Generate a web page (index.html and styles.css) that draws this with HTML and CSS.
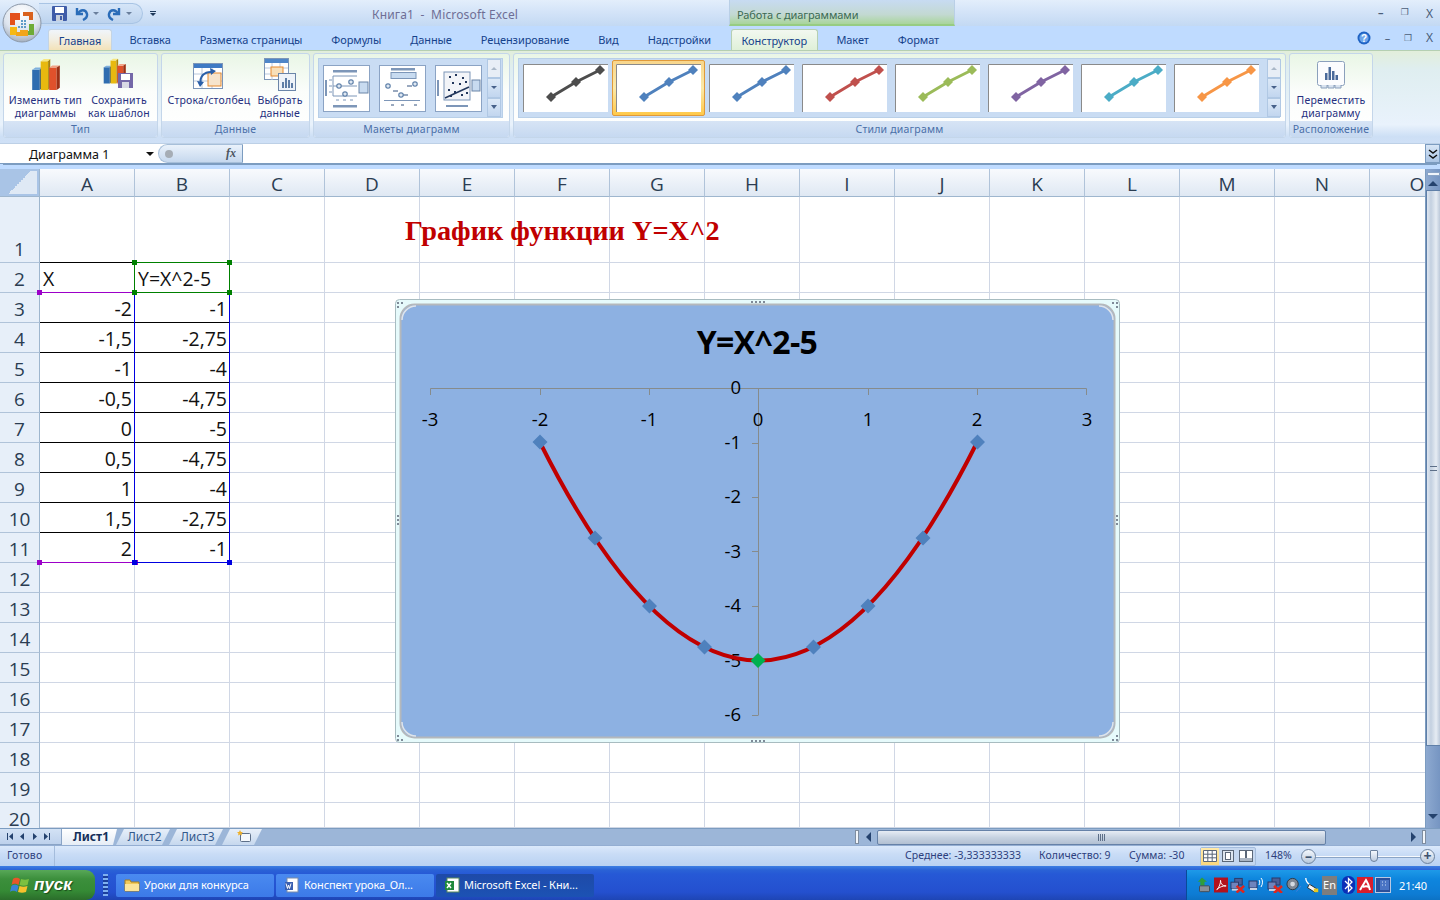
FILE: index.html
```html
<!DOCTYPE html>
<html lang="ru">
<head>
<meta charset="utf-8">
<title>Книга1 - Microsoft Excel</title>
<link rel="stylesheet" href="styles.css">
</head>
<body>
<svg class="defs" width="0" height="0">
  <defs>
    <g id="d"><path d="M0 -5L5 0L0 5L-5 0Z" fill="currentColor"/></g>
    <g id="linethumb">
      <rect width="85" height="48" fill="#fff"/>
      <path d="M.5 48V.5H85" fill="none" stroke="#8a8a8a"/>
      <path d="M28 33L53 18L77 6" fill="none" stroke="currentColor" stroke-width="3"/>
      <use href="#d" x="28" y="33"/><use href="#d" x="53" y="18"/><use href="#d" x="77" y="6"/>
    </g>
    <g id="layoutbase">
      <rect x=".5" y=".5" width="46" height="46" fill="#fff" stroke="#8ba3c4"/>
    </g>
    <g id="dot"><circle r="2.2" fill="#dfe8f2" stroke="#5d7fa8" stroke-width="1.2"/></g>
    <g id="bars">
      <path d="M2 11h7v19H2z" fill="#2f6db0"/><path d="M2 11l3-2h7l-3 2z" fill="#7fb0dd"/><path d="M9 11l3-2v19l-3 2z" fill="#1c4a80"/>
      <path d="M10 3h7v27h-7z" fill="#e8b90f"/><path d="M10 3l3-2h6l-2 2z" fill="#f8e680"/><path d="M17 3l2-2v27l-2 2z" fill="#a9830a"/>
      <path d="M18 9h7v21h-7z" fill="#e0512b"/><path d="M18 9l3-2h7l-3 2z" fill="#f2a285"/><path d="M25 9l3-2v21l-3 2z" fill="#9c3015"/>
    </g>
    <g id="netx">
      <rect x="5" y="1" width="8" height="7" fill="#4a5f98" stroke="#2a3868"/><rect x="1" y="5" width="8" height="7" fill="#6f84bd" stroke="#2a3868"/><rect x="2" y="12" width="7" height="2" fill="#c8d0e0"/>
      <path d="M7 9l8 7M15 9l-8 7" stroke="#e0261c" stroke-width="2.6"/>
    </g>
  </defs>
</svg>

<header class="titlebar">
  <svg class="orb" width="40" height="40" viewBox="0 0 40 40">
    <defs><radialGradient id="og" cx=".5" cy=".25" r=".8"><stop offset="0" stop-color="#fff"/><stop offset=".6" stop-color="#dde4ee"/><stop offset="1" stop-color="#9aa7b8"/></radialGradient></defs>
    <circle cx="20" cy="20" r="19" fill="url(#og)" stroke="#8c98a8"/>
    <path d="M8 10h10v7h-5v5H8z" fill="#e3501b"/><path d="M8 24h7v8H8z" fill="#f5b915"/><path d="M18 27h8v6H14v-4h4z" fill="#f2a51a"/>
    <path d="M21 9h10v8h-4v-4h-6z" fill="#d9621e"/><path d="M27 21h5v11h-6v-4h1z" fill="#6eab35"/>
    <path d="M19 17h2v2h-2zM22 17h2v2h-2zM19 20h2v2h-2zM22 20h2v2h-2zM16 23h2v2h-2zM19 23h2v2h-2zM22 23h2v2h-2z" fill="#5f9bc8"/>
  </svg>
  <div class="qat">
    <svg width="15" height="15" viewBox="0 0 15 15"><rect width="15" height="15" rx="1" fill="#3f5ca8"/><rect x="3" y="1" width="9" height="6" fill="#fff"/><rect x="4" y="9" width="7" height="6" fill="#c8d0dc"/><rect x="8" y="10" width="2" height="4" fill="#3f5ca8"/></svg>
    <svg class="qi1" width="15" height="15" viewBox="0 0 15 15"><path d="M3 2v6h6" fill="none" stroke="#2a6cb8" stroke-width="2.4"/><path d="M4 8c2-5 8-5 9 0 .5 3-2 5-4 6" fill="none" stroke="#2a6cb8" stroke-width="2.4"/></svg>
    <span class="caret"></span>
    <svg class="qi2" width="15" height="15" viewBox="0 0 15 15"><path d="M12 2v6H6" fill="none" stroke="#2a6cb8" stroke-width="2.4"/><path d="M11 8C9 3 3 3 2 8c-.5 3 2 5 4 6" fill="none" stroke="#2a6cb8" stroke-width="2.4"/></svg>
    <span class="caret"></span>
  </div>
  <div class="qat-more"><span class="bar"></span><span class="caret dark"></span></div>
  <div class="doc-title">Книга1&nbsp; - &nbsp;Microsoft Excel</div>
  <div class="ctx-title">Работа с диаграммами</div>
  <div class="winbtns"><span>–</span><span class="sq">❐</span><span class="x">X</span></div>
</header>

<nav class="tabs">
  <div class="tab active">Главная</div>
  <div class="tab t-first">Вставка</div>
  <div class="tab">Разметка страницы</div>
  <div class="tab">Формулы</div>
  <div class="tab">Данные</div>
  <div class="tab">Рецензирование</div>
  <div class="tab">Вид</div>
  <div class="tab t-last">Надстройки</div>
  <div class="ctx-zone">
    <div class="tab ctx-active">Конструктор</div>
    <div class="tab t-maket">Макет</div>
    <div class="tab">Формат</div>
  </div>
  <div class="tab-right">
    <svg width="14" height="14" viewBox="0 0 14 14"><circle cx="7" cy="7" r="6.5" fill="#1f63c4"/><circle cx="7" cy="7" r="4.6" fill="#6ea6ea"/><text x="7" y="10.5" class="help">?</text></svg>
    <span>–</span><span class="sq">❐</span><span class="x">X</span>
  </div>
</nav>

<section class="ribbon">
  <div class="group g-tip">
    <div class="gbody">
      <div class="lbtn b-w80">
        <svg width="32" height="34" viewBox="0 0 30 32"><use href="#bars"/></svg>
        <span>Изменить тип<br>диаграммы</span>
      </div>
      <div class="lbtn b-w66">
        <svg width="34" height="34" viewBox="0 0 34 34"><g transform="scale(.85)"><use href="#bars"/></g><rect x="16" y="15" width="15" height="15" fill="#7468a8"/><rect x="19" y="16" width="9" height="6" fill="#fff"/><rect x="20" y="24" width="7" height="6" fill="#d8d8e4"/></svg>
        <span>Сохранить<br>как шаблон</span>
      </div>
    </div>
    <div class="gfoot">Тип</div>
  </div>
  <div class="group g-dan">
    <div class="gbody">
      <div class="lbtn b-w90">
        <svg width="32" height="30" viewBox="0 0 32 30"><rect x=".5" y="3.5" width="29" height="25" fill="#fff" stroke="#7d96b8"/><rect x="1" y="4" width="28" height="4" fill="#3f7ac4"/><path d="M1 14h28M1 21h28M9 8v20M19 8v20" stroke="#b9c8dc"/><rect x="15" y="13" width="13" height="13" fill="#f6e4cc" stroke="#e58a2e"/><path d="M8 24c-2-7 3-13 12-12" fill="none" stroke="#2a5fa8" stroke-width="2"/><path d="M17 8l6 3-5 4zM4 21l7 1-4 5z" fill="#2a5fa8"/></svg>
        <span>Строка/столбец</span>
      </div>
      <div class="lbtn b-w50">
        <svg width="32" height="34" viewBox="0 0 32 34"><rect x=".5" y=".5" width="24" height="21" fill="#fff" stroke="#7d96b8"/><rect x="1" y="1" width="23" height="4" fill="#4f86c8"/><path d="M1 10h23M1 16h23M8 5v17M16 5v17" stroke="#b9c8dc"/><rect x="7" y="9" width="12" height="9" fill="#f8dfb8" stroke="#e58a2e"/><rect x="14.500" y="15.500" width="17" height="17" fill="#eef3f9" stroke="#6b85a8"/><path d="M18 30v-6h2v6zM21 30V20h2v10zM24 30v-8h2v8zM27 30v-5h2v5z" fill="#5f7ea6"/></svg>
        <span>Выбрать<br>данные</span>
      </div>
    </div>
    <div class="gfoot">Данные</div>
  </div>
  <div class="group g-mak">
    <div class="gbody">
      <div class="gal gal-mak">
        <svg class="lay" width="47" height="47" viewBox="0 0 47 47"><use href="#layoutbase"/><path d="M10 5h24v2.500H10zM10 40h24v2.500H10zM2 15h2v16H2z" fill="#7d96b8"/><path d="M10 11h24M10 21h24M10 31h24M10 11v20M6 15h3M6 21h3M6 27h3M13 35h3M20 35h3M27 35h3" stroke="#7d96b8" fill="none"/><use href="#dot" x="16" y="21"/><use href="#dot" x="28" y="17"/><use href="#dot" x="22" y="29"/><rect x="36" y="17" width="9" height="11" fill="#c8dbf0" stroke="#6b85a8"/></svg>
        <svg class="lay" width="47" height="47" viewBox="0 0 47 47"><use href="#layoutbase"/><path d="M12 3h24v2.500H12zM5 35h36v1H5z" fill="#7d96b8"/><rect x="12" y="7.500" width="25" height="6" fill="#c8dbf0" stroke="#7d96b8"/><path d="M14 26h5M28 21h5M24 30h5M12 40h3M22 40h3M35 40h3" stroke="#34527e"/><use href="#dot" x="9" y="21"/><use href="#dot" x="36" y="19"/><use href="#dot" x="22" y="30"/></svg>
        <svg class="lay" width="47" height="47" viewBox="0 0 47 47"><use href="#layoutbase"/><rect x="9" y="7" width="26" height="28" fill="#f2f4f8" stroke="#7d96b8"/><path d="M10 33L34 22" stroke="#22375c" stroke-width="1.500"/><path d="M14 12h2M20 10h2M27 13h2M17 18h2M24 19h2M30 17h2M13 25h2M19 27h2M26 30h2M31 28h2M15 31h2" stroke="#22375c" stroke-width="2"/><path d="M11 40h22v2H11zM2 15h2v16H2z" fill="#7d96b8"/><rect x="37" y="15" width="8" height="11" fill="#c8dbf0" stroke="#6b85a8"/></svg>
        <div class="gscroll"><span class="up off"></span><span class="down"></span><span class="more"></span></div>
      </div>
    </div>
    <div class="gfoot">Макеты диаграмм</div>
  </div>
  <div class="group g-sti">
    <div class="gbody">
      <div class="gal gal-sti">
        <svg class="st s0" width="85" height="48"><use href="#linethumb"/></svg>
        <div class="st-sel"><svg class="st s1" width="85" height="48"><use href="#linethumb"/></svg></div>
        <svg class="st s1" width="85" height="48"><use href="#linethumb"/></svg>
        <svg class="st s2" width="85" height="48"><use href="#linethumb"/></svg>
        <svg class="st s3" width="85" height="48"><use href="#linethumb"/></svg>
        <svg class="st s4" width="85" height="48"><use href="#linethumb"/></svg>
        <svg class="st s5" width="85" height="48"><use href="#linethumb"/></svg>
        <svg class="st s6" width="85" height="48"><use href="#linethumb"/></svg>
        <div class="gscroll gs-sti"><span class="up off"></span><span class="down"></span><span class="more"></span></div>
      </div>
    </div>
    <div class="gfoot">Стили диаграмм</div>
  </div>
  <div class="group g-ras">
    <div class="gbody">
      <div class="lbtn b-w84">
        <svg width="30" height="28" viewBox="0 0 30 28"><rect x="1.500" y=".5" width="27" height="24" rx="2" fill="#fbfcfe" stroke="#8ba0bc"/><path d="M5 24v3h6v-3M12 24v3h6v-3M19 24v3h6v-3" fill="#d8e2ef" stroke="#8ba0bc"/><path d="M9 19v-7h2.500v7zM12.500 19V6H15v13zM16 19v-9h2.500v9zM19.500 19v-5H22v5z" fill="#4a6a9a"/></svg>
        <span>Переместить<br>диаграмму</span>
      </div>
    </div>
    <div class="gfoot">Расположение</div>
  </div>
</section>

<section class="formula">
  <div class="namebox"><span>Диаграмма 1</span><i class="caret black"></i></div>
  <div class="fxpill"><i class="fxdot"></i><em>fx</em></div>
  <div class="finput"></div>
  <div class="fexpand">
    <svg width="10" height="12" viewBox="0 0 10 12"><path d="M1 2l4 3 4-3M1 7l4 3 4-3" fill="none" stroke="#111" stroke-width="1.500"/></svg>
  </div>
</section>

<main class="work">
  <div class="sheet">
    <div class="colhead">
      <div class="corner"><i></i></div>
      <div class="col">A</div><div class="col">B</div><div class="col">C</div><div class="col">D</div><div class="col">E</div>
      <div class="col">F</div><div class="col">G</div><div class="col">H</div><div class="col">I</div><div class="col">J</div>
      <div class="col">K</div><div class="col">L</div><div class="col">M</div><div class="col">N</div><div class="col">O</div>
    </div>
    <div class="rows">
      <div class="row r-tall"><div class="rh">1</div><div class="cells"><div class="sheet-title">График функции Y=X^2</div></div></div>
      <div class="row"><div class="rh">2</div><div class="cells"><div class="c l tb">X</div><div class="c l tb">Y=X^2-5</div></div></div>
      <div class="row"><div class="rh">3</div><div class="cells"><div class="c b">-2</div><div class="c b">-1</div></div></div>
      <div class="row"><div class="rh">4</div><div class="cells"><div class="c b">-1,5</div><div class="c b">-2,75</div></div></div>
      <div class="row"><div class="rh">5</div><div class="cells"><div class="c b">-1</div><div class="c b">-4</div></div></div>
      <div class="row"><div class="rh">6</div><div class="cells"><div class="c b">-0,5</div><div class="c b">-4,75</div></div></div>
      <div class="row"><div class="rh">7</div><div class="cells"><div class="c b">0</div><div class="c b">-5</div></div></div>
      <div class="row"><div class="rh">8</div><div class="cells"><div class="c b">0,5</div><div class="c b">-4,75</div></div></div>
      <div class="row"><div class="rh">9</div><div class="cells"><div class="c b">1</div><div class="c b">-4</div></div></div>
      <div class="row"><div class="rh">10</div><div class="cells"><div class="c b">1,5</div><div class="c b">-2,75</div></div></div>
      <div class="row"><div class="rh">11</div><div class="cells"><div class="c b">2</div><div class="c b">-1</div></div></div>
      <div class="row"><div class="rh">12</div><div class="cells"></div></div>
      <div class="row"><div class="rh">13</div><div class="cells"></div></div>
      <div class="row"><div class="rh">14</div><div class="cells"></div></div>
      <div class="row"><div class="rh">15</div><div class="cells"></div></div>
      <div class="row"><div class="rh">16</div><div class="cells"></div></div>
      <div class="row"><div class="rh">17</div><div class="cells"></div></div>
      <div class="row"><div class="rh">18</div><div class="cells"></div></div>
      <div class="row"><div class="rh">19</div><div class="cells"></div></div>
      <div class="row r-last"><div class="rh">20</div><div class="cells"></div></div>
    </div>

    <div class="range rg-a"><i class="h tl"></i><i class="h bl"></i><i class="h br"></i></div>
    <div class="range rg-y"><i class="h tl"></i><i class="h tr"></i><i class="h bl"></i><i class="h br"></i></div>
    <div class="range rg-h"><i class="h tl"></i><i class="h tr"></i><i class="h bl"></i><i class="h br"></i></div>

    <svg class="chart" width="725" height="444" viewBox="395 299 725 444">
      <rect x="395.500" y="299.500" width="724" height="443" rx="4" fill="#e6fafb" stroke="#a8bcc0"/>
      <rect x="400.500" y="304.500" width="714" height="433" rx="14" fill="#8db1e2" stroke="#b4b8bc" stroke-width="2"/>
      <path d="M402 320a14 14 0 0 1 14-14M1113 320a14 14 0 0 0-14-14M402 722a14 14 0 0 0 14 14M1113 722a14 14 0 0 1-14 14" fill="none" stroke="#dfe4ea" stroke-width="1.500"/>
      <g fill="#7f8a98">
        <path d="M397 302h2v2h-2zM401 302h2v2h-2zM397 306h2v2h-2zM1112 302h2v2h-2zM1116 302h2v2h-2zM1116 306h2v2h-2zM397 735h2v2h-2zM397 739h2v2h-2zM401 739h2v2h-2zM1116 735h2v2h-2zM1116 739h2v2h-2zM1112 739h2v2h-2z"/>
        <path d="M751 301h2v2h-2zM755 301h2v2h-2zM759 301h2v2h-2zM763 301h2v2h-2zM751 740h2v2h-2zM755 740h2v2h-2zM759 740h2v2h-2zM763 740h2v2h-2z"/>
        <path d="M397 515h2v2h-2zM397 519h2v2h-2zM397 523h2v2h-2zM1116 515h2v2h-2zM1116 519h2v2h-2zM1116 523h2v2h-2z"/>
      </g>
      <text x="757" y="354" class="ct">Y=X^2-5</text>
      <path d="M430.500 395V388.500H1086.500V395M540.500 388.500V395M649.500 388.500V395M868.500 388.500V395M977.500 388.500V395M758.500 388.500V715.500M752 388.500H758M752 443.500H758M752 497.500H758M752 551.500H758M752 606.500H758M752 660.500H758M752 715.500H758" fill="none" stroke="#868b8c"/>
      <g class="al">
        <text x="430" y="426">-3</text><text x="540" y="426">-2</text><text x="649" y="426">-1</text><text x="758" y="426">0</text><text x="868" y="426">1</text><text x="977" y="426">2</text><text x="1087" y="426">3</text>
      </g>
      <g class="al ar">
        <text x="741" y="394">0</text><text x="741" y="449">-1</text><text x="741" y="503">-2</text><text x="741" y="558">-3</text><text x="741" y="612">-4</text><text x="741" y="667">-5</text><text x="741" y="721">-6</text>
      </g>
      <path d="M540 442.500Q758.500 878.500 977 442.500" fill="none" stroke="#c00000" stroke-width="4"/>
      <path class="mk" d="M540 434.500l7.500 7.500-7.500 7.500-7.500-7.500zM595 530.500l7.500 7.500-7.500 7.500-7.500-7.500zM649.500 598.500l7.500 7.500-7.500 7.500-7.500-7.500zM704.500 639.500l7.500 7.500-7.500 7.500-7.500-7.500zM813.500 639.500l7.500 7.500-7.500 7.500-7.500-7.500zM868 598.500l7.500 7.500-7.500 7.500-7.500-7.500zM923 530.500l7.500 7.500-7.500 7.500-7.500-7.500zM977.500 434.500l7.500 7.500-7.500 7.500-7.500-7.500z"/>
      <path d="M758 653l7.500 7.500-7.500 7.500-7.500-7.500z" fill="#00b050"/>
    </svg>
  </div>

  <aside class="vscroll">
    <span class="vsplit"></span>
    <span class="arr-up"></span>
    <div class="vthumb"><i></i></div>
    <span class="arr-down"></span>
  </aside>
</main>

<section class="tabstrip">
  <div class="snav">
    <svg width="53" height="16" viewBox="0 0 53 16"><path d="M7 4h1v7H7zM13 4v7L9 7.500zM24 4v7l-4-3.500zM33 4v7l4-3.500zM44 4v7l4-3.500zM49 4h1v7h-1z" fill="#24426e"/></svg>
  </div>
  <div class="stab on">Лист1</div>
  <div class="stab">Лист2</div>
  <div class="stab">Лист3</div>
  <div class="stab newtab">
    <svg width="16" height="14" viewBox="0 0 16 14"><rect x="4.500" y="3.500" width="10" height="8" rx="1" fill="#f4f8fc" stroke="#5d6f88"/><path d="M4 0l1 2 2 0-1.500 1.500.5 2-2-1-2 1 .5-2L1 2h2z" fill="#eeb02a"/></svg>
  </div>
  <div class="hscroll">
    <span class="hsplit"></span>
    <span class="arr-left"></span>
    <div class="hthumb"><i></i></div>
    <span class="arr-right"></span>
    <span class="hsplit end"></span>
  </div>
</section>

<footer class="status">
  <div class="st-ready">Готово</div>
  <div class="st-stats">
    <span class="s-avg">Среднее: -3,333333333</span>
    <span class="s-cnt">Количество: 9</span>
    <span class="s-sum">Сумма: -30</span>
  </div>
  <div class="views">
    <span class="v on"><svg width="14" height="12" viewBox="0 0 14 12"><path d="M.5.5h13v11H.500zM.5 4.200h13M.5 7.800h13M4.800.5v11M9.200.5v11" fill="#fff" stroke="#5b6778"/></svg></span>
    <span class="v"><svg width="12" height="12" viewBox="0 0 12 12"><rect x=".5" y=".5" width="11" height="11" fill="#dfe6ef" stroke="#5b6778"/><rect x="3.500" y="2.500" width="5" height="7" fill="#fff" stroke="#5b6778"/></svg></span>
    <span class="v"><svg width="14" height="12" viewBox="0 0 14 12"><rect x=".5" y=".5" width="13" height="11" fill="#fff" stroke="#5b6778"/><rect x="6" y="1" width="2" height="7" fill="#5b6778"/><rect x="1" y="8" width="12" height="3" fill="#aab4c2"/></svg></span>
  </div>
  <div class="zoomtext">148%</div>
  <div class="zoombar">
    <span class="zb minus">–</span>
    <div class="ztrack"><i class="zthumb"></i></div>
    <span class="zb">+</span>
  </div>
</footer>

<footer class="taskbar">
  <div class="start">
    <svg width="22" height="22" viewBox="0 0 22 22"><path d="M3 5c3-2 5-1 7 0l-1.500 6c-2-1-4-2-7 0z" fill="#e8562a"/><path d="M11 5c3 1 5 1 8 0l-1.500 6c-3 1-5 1-8 0z" fill="#7cc040"/><path d="M1.500 12c3-2 5-1 7 0L7 18c-2-1-4-2-7 0z" fill="#3a82d8"/><path d="M9.500 12c3 1 5 1 8 0L16 18c-3 1-5 1-8 0z" fill="#f6c12d"/></svg>
    <span>пуск</span>
  </div>
  <div class="grip"></div>
  <div class="task">
    <svg width="16" height="14" viewBox="0 0 16 14"><path d="M1 2h5l1 2h8v9H1z" fill="#f1c95a" stroke="#a77f1e"/><path d="M1 6h14v7H1z" fill="#fbe49a"/></svg>
    <span>Уроки для конкурса</span>
  </div>
  <div class="task">
    <svg width="16" height="16" viewBox="0 0 16 16"><rect x="3" y="1" width="11" height="14" fill="#fff" stroke="#7a8ca8"/><rect x="1" y="5" width="8" height="8" fill="#3a5fb0"/><path d="M2 6.500l1.500 5 1-3.500 1 3.500 1.500-5" stroke="#fff" fill="none"/></svg>
    <span>Конспект урока_Ол...</span>
  </div>
  <div class="task cur">
    <svg width="16" height="16" viewBox="0 0 16 16"><rect x="3" y="1" width="12" height="14" fill="#fff" stroke="#5a8a5a"/><rect x="1" y="4" width="9" height="9" fill="#1f8a3c"/><path d="M3 6l4 5M7 6l-4 5" stroke="#fff" stroke-width="1.500"/></svg>
    <span>Microsoft Excel - Кни...</span>
  </div>
  <div class="tray">
    <svg width="15" height="18" viewBox="0 0 18 18"><path d="M6 0l6 5H9v5H4V5H1z" fill="#2f9e3a"/><rect x="3" y="10" width="12" height="7" rx="1" fill="#8a8f96" stroke="#3d4148"/></svg>
    <svg width="14" height="16" viewBox="0 0 15 16"><rect width="15" height="16" fill="#b3121d"/><path d="M3 13c3-3 4-7 4-10 0 4 2 6 6 6-4 0-7 1-10 4z" fill="none" stroke="#fff"/></svg>
    <svg width="16" height="16" viewBox="0 0 17 16"><use href="#netx"/></svg>
    <svg width="17" height="16" viewBox="0 0 17 16"><rect x="1" y="4" width="8" height="7" fill="#6f84bd" stroke="#2a3868"/><rect x="2" y="11" width="7" height="2" fill="#c8d0e0"/><path d="M11 3c1 1 1 3 0 5M13 1c2 2 2 6 0 9" stroke="#fff" fill="none"/></svg>
    <svg width="17" height="16" viewBox="0 0 17 16"><use href="#netx"/></svg>
    <svg width="16" height="16" viewBox="0 0 17 16"><circle cx="7" cy="7" r="6" fill="#7e8794" stroke="#2f3540"/><circle cx="7" cy="7" r="2.500" fill="#d5dae2"/><path d="M11 15l5-6" stroke="#4f7fd8"/></svg>
    <svg width="16" height="17" viewBox="0 0 18 17"><path d="M2 0c0 4 2 6 5 8" fill="none" stroke="#fff" stroke-width="1.500"/><path d="M6 7l8 5-2 4-8-5z" fill="#f4f4f4" stroke="#222"/><rect x="11" y="12" width="5" height="4" fill="#e6c820"/></svg>
    <span class="lang">En</span>
    <svg class="bt" width="13" height="18" viewBox="0 0 13 18"><rect width="13" height="18" rx="6" fill="#0a2fb8"/><path d="M3 5l7 7-3.500 3.500v-13L10 6l-7 7" fill="none" stroke="#fff" stroke-width="1.300"/></svg>
    <svg width="16" height="16" viewBox="0 0 16 16"><rect width="16" height="16" fill="#d81e2c"/><path d="M3 13L9 3c2 3 3 6 4 10M6 10c2-1 4-1 6 0" fill="none" stroke="#fff" stroke-width="2"/></svg>
    <svg width="17" height="16" viewBox="0 0 17 16"><rect x=".5" y=".5" width="15" height="15" fill="#2a4f9a" stroke="#b8c8e4"/><rect x="5" y="3" width="9" height="10" fill="#4a74c4"/><path d="M7 5h1M10 5h1M7 8h1M10 8h1" stroke="#cfe0f8"/></svg>
    <span class="clock">21:40</span>
  </div>
</footer>
</body>
</html>
```

FILE: styles.css
```css
* { box-sizing: border-box; }
html, body { margin: 0; padding: 0; }
body {
  width: 1440px; height: 900px; overflow: hidden;
  display: flex; flex-direction: column;
  font-family: "Noto Sans", "DejaVu Sans", sans-serif;
  font-size: 11px; color: #15428b; background: #bfdbff;
}
.defs { position: absolute; }

/* title bar */
.titlebar {
  height: 26px; flex: none; display: flex; align-items: center; position: relative;
  background: linear-gradient(#e3eefb, #d4e4f8 45%, #c3d9f3);
}
.orb { position: absolute; left: 2px; top: 3px; z-index: 5; }
.qat {
  width: 104px; height: 21px; margin-left: 39px; padding-left: 13px;
  display: flex; align-items: center;
  background: linear-gradient(#d5e5f8, #bcd3ee); border: 1px solid #a8c4e4; border-left: none;
  border-radius: 0 11px 11px 0;
}
.qi1 { margin-left: 7px; }
.qi2 { margin-left: 8px; }
.caret { width: 0; height: 0; margin-left: 4px; border: 3px solid transparent; border-top: 3px solid #6a7f9c; border-bottom: none; }
.qat-more { width: 8px; margin-left: 6px; display: flex; flex-direction: column; align-items: center; gap: 1px; }
.bar { width: 6px; height: 1px; background: #1e395b; }
.caret.dark { margin: 0; border-top-color: #1e395b; }
.doc-title { margin-left: 215px; width: 357px; padding-top: 2px; font-size: 12px; letter-spacing: .15px; color: #6e6e95; }
.ctx-title {
  width: 226px; height: 26px; padding: 7px 0 0 7px; font-size: 11px; color: #3b6a53; letter-spacing: -.1px;
  background: linear-gradient(#c7dbf2, #c3d9d2 60%, #a9d59b); border-left: 1px solid #b9cfe6; border-right: 1px solid #b9cfe6;
  border-bottom: 2px solid #97cc82;
}
.winbtns { margin-left: auto; width: 62px; padding-right: 7px; display: flex; justify-content: space-between; color: #4a5d78; font-size: 11px; font-weight: 700; }
.sq { font-size: 9px; font-weight: 400; }
.x { font-weight: 400; font-size: 12px; }

/* tabs */
.tabs { height: 24px; flex: none; display: flex; align-items: flex-end; padding-left: 48px; background: #bfdbff; }
.tab { height: 21px; padding: 3px 14.500px 0; white-space: nowrap; font-size: 11px; letter-spacing: -.08px; color: #15428b; text-align: center; }
.tab.active {
  width: 64px; padding: 3px 0 0; border: 1px solid #c4d4e4; border-bottom: none; border-radius: 3px 3px 0 0;
  background: linear-gradient(#f0f5fb, #f2eee0 50%, #f3e2b8);
}
.t-first { margin-left: 3px; }
.t-last { margin-right: 2px; }
.t-maket { margin-left: 4px; }
.ctx-zone { display: flex; align-items: flex-end; width: 226px; height: 24px; padding-left: 3px; }
.tab.ctx-active {
  width: 88px; padding: 3px 0 0; border: 1px solid #b5cfb2; border-bottom: none; border-radius: 3px 3px 0 0;
  background: linear-gradient(#f2f8f0, #dff0d8);
}
.tab-right { margin-left: auto; width: 83px; padding: 0 7px 4px 0; display: flex; justify-content: space-between; align-items: center; color: #4a5d78; font-size: 11px; }
.help { font: 700 10px "Liberation Sans", sans-serif; fill: #fff; text-anchor: middle; }

/* ribbon */
.ribbon {
  height: 93px; flex: none; padding: 2px 0 6px 3px; display: flex; gap: 3px;
  background: linear-gradient(#e2eedb 0, #dfeef0 20%, #e9f2fc 80%, #cddff5 93%, #cfe0f6);
  border-top: 1px solid #b5cfb2;
}
.group { display: flex; flex-direction: column; height: 85px; border: 1px solid #c4d6ea; border-radius: 3px; background: linear-gradient(#e9f6e6, #fbfdfb 45%, #fff); overflow: hidden; }
.gbody { flex: 1; display: flex; min-height: 0; }
.gfoot { height: 16px; flex: none; text-align: center; font-size: 10.500px; line-height: 17px; letter-spacing: .2px; color: #4a6fa8; background: linear-gradient(#d7e4f5, #c6d9f1); }
.g-tip { width: 155px; } .g-tip .gbody { padding-left: 1px; }
.g-dan { width: 149px; } .g-dan .gbody { padding-left: 1px; }
.g-mak { width: 197px; }
.g-sti { width: 773px; }
.g-ras { width: 84px; }
.lbtn { display: flex; flex-direction: column; align-items: center; padding-top: 4px; text-align: center; line-height: 13px; white-space: nowrap; font-size: 10.500px; letter-spacing: .2px; color: #26307f; }
.lbtn svg { height: 34px; flex: none; margin-bottom: 2px; }
.b-w80 { width: 81px; } .b-w66 { width: 66px; }
.b-w90 { width: 92px; } .b-w50 { width: 50px; } .b-w84 { width: 82px; }
.gal { margin: 4px 0 0 4px; height: 60px; display: flex; align-items: center; background: #c9dcf3; border: 1px solid #b8cfe8; }
.gal-mak { width: 185px; padding-left: 4px; gap: 9px; }
.gal-sti { width: 762px; padding-left: 4px; gap: 8px; position: relative; }
.lay { flex: none; }
.st { flex: none; display: block; }
.s0 { color: #4d4d4d; } .s1 { color: #4f81bd; } .s2 { color: #c0504d; } .s3 { color: #9bbb59; }
.s4 { color: #8064a2; } .s5 { color: #4bacc6; } .s6 { color: #f79646; }
.st-sel { margin: 0 -4px; padding: 3px; height: 56px; flex: none; border: 1px solid #e09a3a; border-radius: 2px; background: linear-gradient(#f8d68c, #fbe9a8 50%, #ffc94a); }
.gscroll { margin-left: auto; width: 14px; height: 58px; display: flex; flex-direction: column; gap: 0; flex: none; margin-right: 0; }
.gal-mak .gscroll { margin-left: -4px; }
.gscroll span { flex: 1; display: flex; align-items: center; justify-content: center; background: linear-gradient(#dde9f7, #c2d6ef); border: 1px solid #b0c8e4; }
.gscroll .off { background: #e8eef6; }
.gscroll span::after { content: ""; border: 3px solid transparent; }
.gscroll .up::after { border-top: none; border-bottom: 3px solid #aab8c8; }
.gscroll .down::after { border-bottom: none; border-top: 3px solid #47618a; }
.gscroll .more::after { border-bottom: none; border-top: 4px solid #47618a; }

/* formula bar */
.formula { height: 21px; flex: none; display: flex; background: #fff; border-bottom: 1px solid #7c9cc0; margin-bottom: 5px; box-shadow: 0 4px 0 -3px #7c9cc0; border-top: 1px solid #bdd0e6; }
.namebox { width: 158px; padding: 1px 4px 0 29px; display: flex; align-items: center; justify-content: space-between; font-size: 12.500px; color: #111; }
.caret.black { border-width: 4px; border-top-color: #111; }
.fxpill { width: 85px; display: flex; align-items: center; justify-content: space-between; padding: 0 6px; border: 1px solid #a7bfd9; border-right: 1px solid #7c9cc0; border-radius: 10px 0 0 10px; background: linear-gradient(#eaf2fb, #c6d8ee); }
.fxdot { width: 8px; height: 8px; border-radius: 50%; background: #a6adb5; }
.fxpill em { font: italic 700 12px "Liberation Serif", serif; color: #4c5560; }
.finput { flex: 1; }
.fexpand { width: 15px; display: flex; align-items: center; justify-content: center; background: linear-gradient(#d8e6f6, #aac4e4); border: 1px solid #7c9cc0; }

/* sheet */
.work { height: 659px; flex: none; display: flex; }
.sheet { position: relative; width: 1425px; height: 659px; overflow-x: clip; overflow-y: visible; background: #fff; font-family: "Open Sans", "Noto Sans", sans-serif; color: #111; }
.colhead { height: 28px; display: flex; }
.corner { width: 40px; flex: none; padding: 2px; background: #a9c4e6; border-right: 1px solid #9eb6ce; border-bottom: 1px solid #9eb6ce; }
.corner i { display: block; height: 100%; background: linear-gradient(135deg, transparent 50%, #dfe9f5 50%); }
.col { width: 95px; flex: none; text-align: center; font-size: 19px; line-height: 31px; color: #2b3d52; background: linear-gradient(#f8fafd, #dfe8f3); border-right: 1px solid #b0c3d9; border-bottom: 1px solid #9eb6ce; }
.row { display: flex; height: 30px; }
.r-tall { height: 66px; }
.r-last { height: 25px; }
.rh { width: 40px; flex: none; text-align: center; font-size: 19px; line-height: 33px; color: #2b3d52; background: #e7eff9; border-right: 1px solid #9eb6ce; border-bottom: 1px solid #b0c3d9; }
.r-tall .rh { padding-top: 36px; }
.r-last .rh { border-bottom: none; }
.cells { flex: 1; display: flex; position: relative; background: repeating-linear-gradient(90deg, transparent 0 94px, #d0d7e5 94px 95px); border-bottom: 1px solid #d0d7e5; }
.c { width: 95px; flex: none; height: 30px; padding: 0 3px 0 3px; font-size: 19.500px; line-height: 31px; text-align: right; border-bottom: 1px solid #000; }
.c.l { text-align: left; }
.sheet-title { padding: 0 0 17px 365px; font: 700 28.300px/1 "Liberation Serif", serif; color: #c00000; align-self: flex-end; white-space: nowrap; }
.r-tall .cells::after { content: ""; position: absolute; left: 0; bottom: -1px; width: 95px; height: 1px; background: #000; }

/* selection ranges */
.range { position: absolute; }
.range .h { position: absolute; width: 5px; height: 5px; background: currentColor; }
.h.tl { left: -3px; top: -3px; } .h.tr { right: -3px; top: -3px; }
.h.bl { left: -3px; bottom: -3px; } .h.br { right: -3px; bottom: -3px; }
.rg-a { left: 40px; top: 123px; width: 95px; height: 271px; color: #9c00c8; border-top: 1px solid currentColor; border-bottom: 1px solid currentColor; }
.rg-y { left: 134px; top: 123px; width: 96px; height: 271px; color: #0000e0; border: 1px solid currentColor; }
.rg-h { left: 134px; top: 93px; width: 96px; height: 31px; color: #008000; border: 1px solid currentColor; }

/* chart */
.chart { position: absolute; left: 395px; top: 130px; display: block; }
.ct { font: 700 32px "Open Sans", sans-serif; fill: #000; text-anchor: middle; letter-spacing: -.6px; }
.al text { font: 18.500px "Open Sans", sans-serif; fill: #000; text-anchor: middle; }
.ar text { text-anchor: end; }
.mk { fill: #4f81bd; }

/* scrollbars */
.vscroll { width: 15px; flex: none; display: flex; flex-direction: column; align-items: center; background: linear-gradient(90deg, #8da9d0, #7695c2); border-left: 1px solid #7c9cc0; }
.vsplit { width: 13px; height: 4px; margin-top: 3px; background: #f0f5fb; border: 1px solid #8aa4c6; }
.arr-up { width: 0; margin-top: 5px; border: 5px solid transparent; border-bottom: 5px solid #24426e; border-top: none; }
.vthumb { width: 15px; height: 556px; margin-top: 4px; padding: 0 3px; display: flex; align-items: center; background: linear-gradient(90deg, #dfe7f1, #c3d0e0 30%, #e6ecf3 70%, #bcc9da); border: 1px solid #5f7fa8; }
.vthumb i { display: block; width: 100%; height: 5px; border-top: 1px solid #5d6f88; border-bottom: 1px solid #5d6f88; }
.arr-down { width: 0; margin-top: 68px; border: 5px solid transparent; border-top: 5px solid #24426e; border-bottom: none; }

.tabstrip { height: 17px; flex: none; display: flex; align-items: stretch; background: #9cb6d8; border-top: 1px solid #7c9cc0; position: relative; }
.snav { width: 62px; flex: none; background: linear-gradient(#d3e2f5, #bdd1ec); border-right: 1px solid #8aa4c6; border-bottom: 1px solid #8aa4c6; }
.snav svg { display: block; }
.stab { width: 54px; flex: none; text-align: center; font: 12px/16px "Noto Sans", sans-serif; color: #355a8c; background: linear-gradient(#e7eff9, #c6d8ee); clip-path: polygon(0 100%, 8px 0, 100% 0, calc(100% - 8px) 100%); margin-right: -1px; padding-left: 3px; }
.stab.on { width: 55px; font-weight: 700; color: #15305a; background: linear-gradient(#fff, #e6edf6); clip-path: polygon(0 0, 100% 0, calc(100% - 4px) 100%, 0 100%); }
.stab.newtab { width: 40px; display: flex; align-items: center; justify-content: center; }
.hscroll { margin-left: auto; width: 585px; display: flex; align-items: center; }
.hsplit { width: 4px; height: 14px; background: #f2f6fb; border: 1px solid #7e8da0; flex: none; }
.hsplit.end { margin-left: 6px; margin-right: 15px; }
.arr-left { width: 0; margin-left: 7px; flex: none; border: 5px solid transparent; border-right: 5px solid #24426e; border-left: none; }
.hthumb { width: 449px; height: 15px; margin-left: 6px; flex: none; display: flex; align-items: center; justify-content: center; background: linear-gradient(#e6ecf4, #c6d2e1 50%, #b2c0d2); border: 1px solid #6682a8; border-radius: 2px; }
.hthumb i { width: 7px; height: 7px; background: repeating-linear-gradient(90deg, #5d6f88 0 1px, transparent 1px 2px); }
.arr-right { width: 0; margin-left: 85px; flex: none; border: 5px solid transparent; border-left: 5px solid #24426e; border-right: none; }

/* status */
.status { height: 21px; flex: none; display: flex; align-items: center; background: linear-gradient(#dbe9fb, #c9dcf6 40%, #b9d2f2); border-top: 1px solid #94aed2; font-size: 10.500px; color: #2d3f7d; }
.st-ready { width: 55px; padding-left: 7px; height: 100%; line-height: 18px; border-right: 1px solid #a4bcdc; letter-spacing: .2px; }
.st-stats { margin-left: auto; width: 292px; padding-bottom: 2px; display: flex; letter-spacing: .05px; }
.s-avg { width: 134px; } .s-cnt { width: 90px; }
.views { width: 56px; height: 19px; display: flex; align-items: center; background: #c5d7ef; border: 1px solid #a4bcdc; border-radius: 2px; margin-right: 9px; margin-left: 3px; }
.v { width: 18px; height: 17px; display: flex; align-items: center; justify-content: center; }
.v.on { background: linear-gradient(#ffe9a8, #fbd77c); }
.zoomtext { width: 31px; padding-bottom: 2px; }
.zoombar { width: 139px; display: flex; align-items: center; justify-content: space-between; padding-right: 5px; margin-left: 5px; }
.zb { width: 15px; height: 15px; border-radius: 50%; line-height: 12px; font-size: 14px; font-weight: 700; text-align: center; color: #3f5370; background: linear-gradient(#f4f8fd, #b8c8dc); border: 1px solid #6c829e; flex: none; }
.ztrack { flex: 1; height: 1px; margin: 0; background: #f6f9fd; box-shadow: 0 1px 0 #8aa4c6; position: relative; }
.zthumb { position: absolute; left: 54px; top: -6px; width: 8px; height: 12px; background: linear-gradient(#f4f8fd, #bccbdf); border: 1px solid #6c829e; border-radius: 1px 1px 4px 4px; }

/* taskbar */
.taskbar { height: 34px; flex: none; display: flex; align-items: flex-start; padding-top: 4px; font: 11px "Noto Sans", sans-serif; color: #fff; background: linear-gradient(#3d7fe3 0, #2a62d6 4px, #2659d6 8px, #2450cf 26px, #1e45b4); }
.start { width: 95px; height: 30px; flex: none; display: flex; align-items: center; gap: 2px; padding-left: 10px; border-radius: 0 9px 9px 0; background: linear-gradient(#58a858, #3c8f3c 30%, #358a35 70%, #2b6d2b); font: italic 700 17px "Liberation Sans", sans-serif; text-shadow: 1px 1px 1px #1a4a1a; }
.grip { width: 5px; height: 22px; margin: 4px 8px 0 8px; flex: none; background: repeating-linear-gradient(#7fb0f0 0 2px, #1c3f9c 2px 4px); }
.task { width: 158px; height: 23px; flex: none; margin: 4px 2px 0 0; display: flex; align-items: center; gap: 4px; padding: 0 0 2px 8px; border-radius: 2px; background: linear-gradient(#4a8af0, #3c7ae8); letter-spacing: -.1px; white-space: nowrap; }
.task.cur { background: linear-gradient(#1e4aa8, #1c52b4); }
.tray { margin-left: auto; width: 254px; height: 30px; display: flex; align-items: center; gap: 2px; padding-left: 10px; background: linear-gradient(#1e9ae8, #0e86de 30%, #0e7cd4 80%, #0c72c4); border-left: 1px solid #0a4a98; }
.tray svg { flex: none; }
.lang { width: 15px; height: 19px; line-height: 18px; text-align: center; background: #7d7d7d; font-size: 11px; }
.bt { margin-left: 3px; }
.clock { margin-left: 5px; font-size: 11px; }
```
